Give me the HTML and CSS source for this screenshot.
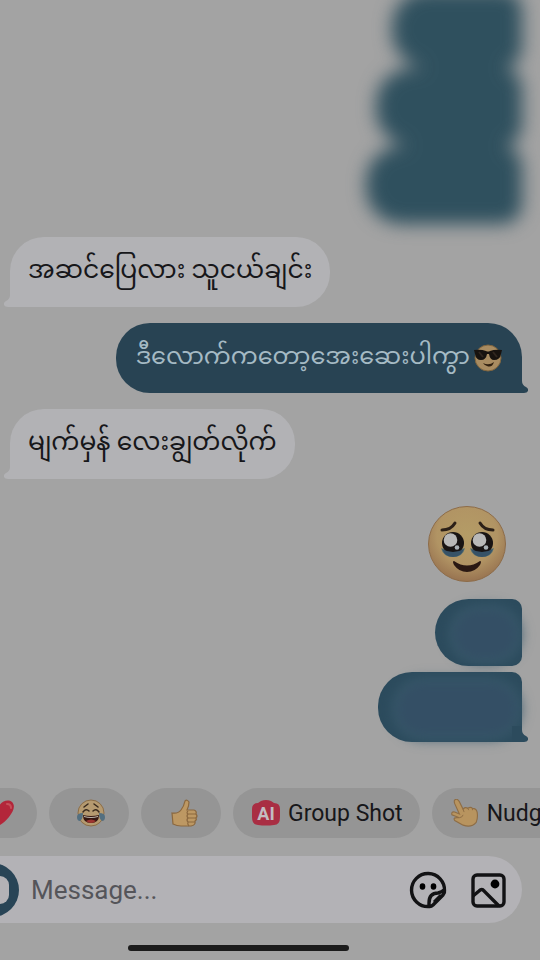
FILE: index.html
```html
<!DOCTYPE html>
<html lang="my">
<head>
  <meta charset="UTF-8">
  <meta name="viewport" content="width=device-width, initial-scale=1.0">
  <title>Chat</title>
  <link rel="stylesheet" href="styles.css">
</head>
<body>
  <div class="chat">
    <main class="thread">
      <div class="hidden-group">
        <div class="smudge smudge-small"></div>
        <div class="smudge smudge-medium"></div>
        <div class="smudge smudge-large"></div>
      </div>

      <div class="bubble received">
        <p>အဆင်ပြေလား သူငယ်ချင်း</p>
        <svg class="tail" viewBox="0 0 16 16" aria-hidden="true"><path d="M6 0V4Q6 8 2 10Q-1 12 0 14Q1 16 4 16H16V0Z"/></svg>
      </div>

      <div class="bubble sent">
        <p>ဒီလောက်ကတော့အေးဆေးပါကွာ</p>
        <svg class="emoji" viewBox="0 0 28 28" role="img" aria-label="Cool">
          <circle cx="14" cy="14" r="13" fill="#a98c61" stroke="#80653f"/>
          <path d="M0 6Q7 5 12 7Q14 8 16 7Q21 5 28 6L27 10Q26 16 20 16Q16 16 15 10H13Q12 16 7 16Q2 16 1 10Z" fill="#17120f"/>
          <path d="M5 8L9 13M19 8L23 13" stroke="#30261f" stroke-width="2"/>
          <path d="M9 19Q15 22 20 18Q18 24 13 22Q10 21 9 19Z" fill="#31200f"/>
        </svg>
        <svg class="tail" viewBox="0 0 16 16" aria-hidden="true"><path d="M10 0V4Q10 8 14 10Q17 12 16 14Q15 16 12 16H0V0Z"/></svg>
      </div>

      <div class="bubble received">
        <p>မျက်မှန် လေးချွတ်လိုက်</p>
        <svg class="tail" viewBox="0 0 16 16" aria-hidden="true"><path d="M6 0V4Q6 8 2 10Q-1 12 0 14Q1 16 4 16H16V0Z"/></svg>
      </div>

      <svg class="sticker" viewBox="0 0 80 78" role="img" aria-label="Holding back tears">
        <defs>
          <radialGradient id="face" cx="50%" cy="38%" r="60%">
            <stop offset="0" stop-color="#b49c66"/>
            <stop offset="0.650" stop-color="#b19464"/>
            <stop offset="1" stop-color="#9a7652"/>
          </radialGradient>
        </defs>
        <ellipse cx="40" cy="39" rx="38.500" ry="37.500" fill="url(#face)" stroke="#8d6c49"/>
        <path d="M15 25Q24 25 28 18M66 25Q57 25 53 18" fill="none" stroke="#2c2018" stroke-width="3" stroke-linecap="round"/>
        <path d="M14 43Q25 48 38 43Q36 52 26 52Q16 52 14 43ZM43 43Q55 48 67 43Q65 52 55 52Q45 52 43 43Z" fill="#5b7270"/>
        <circle cx="26" cy="38" r="11" fill="#181414"/>
        <circle cx="55" cy="38" r="11" fill="#181414"/>
        <path d="M15 44Q26 50 37 44Q34 52 26 52Q18 52 15 44ZM44 44Q55 50 66 44Q63 52 55 52Q47 52 44 44Z" fill="#365267"/>
        <circle cx="23.500" cy="35" r="6.800" fill="#b9b9b9"/>
        <circle cx="52.500" cy="35" r="6.800" fill="#b9b9b9"/>
        <circle cx="30" cy="42.500" r="2.300" fill="#a9b0b5"/>
        <circle cx="59" cy="42.500" r="2.300" fill="#a9b0b5"/>
        <path d="M27 56Q40 65 53 56Q55 56 53 60Q48 67 40 67Q32 67 27 60Q25 56 27 56Z" fill="#2a1813"/>
      </svg>

      <div class="bubble sent covered covered-short"></div>
      <div class="bubble sent covered covered-long">
        <svg class="tail" viewBox="0 0 16 16" aria-hidden="true"><path d="M10 0V4Q10 8 14 10Q17 12 16 14Q15 16 12 16H0V0Z"/></svg>
      </div>
    </main>

    <div class="shortcuts">
      <button class="chip reaction" type="button" aria-label="Heart">
        <svg viewBox="0 0 28 28"><path d="M12 27C6 22 0 17 0 10C0 4 4 1 8 2C11 2 13 4 14 7C17 2 23 0 27 3C31 7 28 13 24 18C20 23 16 26 12 27Z" fill="#b3263a"/><path d="M22 5Q26 5 26 9" fill="none" stroke="#c5505a" stroke-width="2" stroke-linecap="round"/></svg>
      </button>
      <button class="chip reaction" type="button" aria-label="Laugh">
        <svg viewBox="0 0 28 28">
          <circle cx="14" cy="14" r="13" fill="#b59a70" stroke="#8c6d46"/>
          <path d="M7 8L11 5M17 5L21 8M6 13Q9 9 12 12M16 12Q19 9 22 13" fill="none" stroke="#38291c" stroke-width="1.500" stroke-linecap="round"/>
          <path d="M6 16Q14 18 22 16Q22 24 14 24Q6 24 6 16Z" fill="#351711"/>
          <path d="M7 17Q14 19 21 17V18Q14 20 7 18Z" fill="#bdb7ae"/>
          <path d="M9 22Q14 19 19 22Q14 26 9 22Z" fill="#9d3430"/>
          <path d="M6 14Q0 14 0 18Q0 22 3 22Q6 20 6 14ZM22 14Q28 14 28 18Q28 22 25 22Q22 20 22 14Z" fill="#536f80"/>
        </svg>
      </button>
      <button class="chip reaction thumb" type="button" aria-label="Like">
        <svg viewBox="0 0 28 28"><path d="M2 14Q8 15 11 11Q14 7 15 2Q17 0 19 3Q19 7 17 11H24Q27 12 26 15Q28 17 26 19Q27 21 25 22Q26 26 21 27H11Q7 27 3 25Z" fill="#bd9863" stroke="#8b683f" stroke-width="1.200"/><path d="M18 15H26M18 19H26M18 23H25M18 12Q16 14 18 15Q16 17 18 19Q16 21 18 23Q17 25 19 27" fill="none" stroke="#8b683f" stroke-width="1.200"/></svg>
      </button>
      <button class="chip" type="button">
        <svg viewBox="0 0 30 28" aria-hidden="true"><path d="M7 4L10 2Q15 0 20 2L23 4Q29 4 29 10V18Q29 26 23 26Q15 27 7 26Q1 26 1 18V10Q1 4 7 4Z" fill="#a92e43"/><text class="badge-text" x="15" y="21" text-anchor="middle">AI</text></svg>
        Group Shot
      </button>
      <button class="chip" type="button">
        <svg viewBox="0 0 30 30" aria-hidden="true"><path d="M4 1Q7 -1 9 3L13 11Q15 8 18 10Q21 8 23 10Q27 10 28 14Q29 20 27 25Q22 31 13 28L4 23Q2 20 6 20L9 20L1 17Q0 13 4 14L9 16L4 5Q3 2 4 1Z" fill="#b8945f" stroke="#8e6d45" stroke-width="1.200"/><path d="M13 11L14 14M18 10L19 12M23 10L23 12M9 20Q12 20 13 17" fill="none" stroke="#8e6d45"/></svg>
        Nudge
      </button>
    </div>

    <form class="composer">
      <button class="camera" type="button" aria-label="Camera"><span></span></button>
      <input type="text" aria-label="Message" placeholder="Message...">
      <button class="tool" type="button" aria-label="Stickers">
        <svg viewBox="0 0 38 38"><path d="M20 35.500A16.500 16.500 0 1 1 35.500 20Q36 22 34 24L24 34Q22 36 20 35.500ZM20 35V32Q20 22 29 22Q33 21 35 19" fill="none" stroke="#121214" stroke-width="3.400" stroke-linejoin="round"/><path d="M25 31L32 24" stroke="#121214" stroke-width="3"/><ellipse cx="13.500" cy="15.500" rx="2.800" ry="3.200"/><ellipse cx="24.500" cy="15.500" rx="2.800" ry="3.200"/></svg>
      </button>
      <button class="tool" type="button" aria-label="Photos">
        <svg viewBox="0 0 38 38"><rect x="3" y="4" width="31" height="31" rx="4" fill="none" stroke="#121214" stroke-width="3.400"/><path d="M3 25L9 20Q12 17 14 20L29 35" fill="none" stroke="#121214" stroke-width="3.400"/><circle cx="25" cy="13" r="4.400"/></svg>
      </button>
    </form>

    <div class="home-bar"></div>
  </div>
</body>
</html>
```
FILE: styles.css
```css
* {
  box-sizing: border-box;
}
body {
  margin: 0;
  background-color: #a3a3a3;
  color: #17171a;
  font-family: Roboto, "Noto Sans Myanmar", "Noto Sans", sans-serif;
}
button,
input {
  border: none;
  padding: 0;
  background: none;
  font: inherit;
  color: inherit;
}
.chat {
  display: flex;
  flex-direction: column;
  height: 100vh;
  overflow: hidden;
}

/* messages */
.thread {
  flex: 1;
  min-height: 0;
  display: flex;
  flex-direction: column;
  justify-content: flex-end;
  padding: 0 18px 46px 10px;
  overflow: hidden;
}
.hidden-group {
  display: flex;
  flex-direction: column;
  align-items: flex-end;
  margin-bottom: 13px;
  filter: blur(9px);
}
.smudge {
  height: 78px;
  flex-shrink: 0;
  border-radius: 36px 20px 20px 36px;
  background-color: #2f505e;
}
.smudge-small {
  width: 130px;
}
.smudge-medium {
  width: 146px;
}
.smudge-large {
  width: 156px;
}
.bubble {
  position: relative;
  flex-shrink: 0;
  display: flex;
  align-items: center;
  height: 70px;
  margin-bottom: 16px;
  border-radius: 34px;
  white-space: nowrap;
}
.bubble p {
  margin: 0;
}
.received {
  align-self: flex-start;
  padding: 0 18px;
  border-bottom-left-radius: 0;
  background-color: #b2b2b5;
  fill: #b2b2b5;
  font-size: 25px;
}
.sent {
  align-self: flex-end;
  padding: 0 20px;
  border-bottom-right-radius: 0;
  background-color: #284353;
  fill: #284353;
  color: #a5bac4;
  font-size: 24px;
}
.tail {
  position: absolute;
  bottom: 0;
  width: 16px;
  height: 16px;
}
.received .tail {
  left: -6px;
}
.sent .tail {
  right: -6px;
}
.emoji {
  width: 28px;
  height: 28px;
  margin-left: 4px;
}
.sticker {
  align-self: flex-end;
  flex-shrink: 0;
  width: 80px;
  height: 78px;
  margin: 10px 15px 16px 0;
}
.covered {
  border-radius: 34px 10px 0 34px;
  background-color: #2c4b5d;
  fill: #2c4b5d;
}
.covered::before {
  content: "";
  position: absolute;
  inset: 12px 6px 8px 20px;
  border-radius: 26px;
  background-color: #344f65;
  box-shadow: 0 0 8px 5px #3b5b6d;
  filter: blur(4px);
}
.covered-short {
  width: 87px;
  height: 67px;
  margin-bottom: 6px;
  border-bottom-right-radius: 10px;
}
.covered-long {
  width: 144px;
  margin-bottom: 0;
}

/* quick replies */
.shortcuts {
  display: flex;
  gap: 12px;
  margin-left: -43px;
}
.chip {
  flex-shrink: 0;
  display: flex;
  align-items: center;
  justify-content: center;
  gap: 7px;
  height: 50px;
  padding: 0 17px 0 18px;
  border-radius: 25px;
  background-color: #959595;
  font-size: 23px;
  white-space: nowrap;
}
.chip svg {
  width: 30px;
  height: 28px;
}
.reaction {
  width: 80px;
  padding: 0 0 0 4px;
}
.thumb {
  padding-left: 6px;
}
.badge-text {
  fill: #c3bcc1;
  font-size: 18px;
  font-weight: bold;
}

/* message box */
.composer {
  display: flex;
  align-items: center;
  height: 67px;
  margin: 18px 18px 22px 0;
  padding-right: 14px;
  border-radius: 0 34px 34px 0;
  background-color: #b3b2b6;
}
.camera {
  flex-shrink: 0;
  display: flex;
  align-items: center;
  justify-content: center;
  width: 54px;
  height: 54px;
  margin-left: -35px;
  border-radius: 50%;
  background-color: #284456;
}
.camera span {
  width: 34px;
  height: 28px;
  border-radius: 9px;
  background-color: #b3b2b6;
}
.composer input {
  flex: 1;
  min-width: 0;
  padding-left: 12px;
  font-size: 26px;
  outline: none;
}
.composer input::placeholder {
  color: #55555a;
  opacity: 1;
}
.tool {
  flex-shrink: 0;
  width: 38px;
  height: 38px;
  margin-left: 23px;
}
.tool svg {
  display: block;
  width: 100%;
  height: 100%;
}
.home-bar {
  width: 41%;
  height: 6px;
  margin: 0 0 9px 128px;
  border-radius: 3px;
  background-color: #1b1b1b;
}
```
